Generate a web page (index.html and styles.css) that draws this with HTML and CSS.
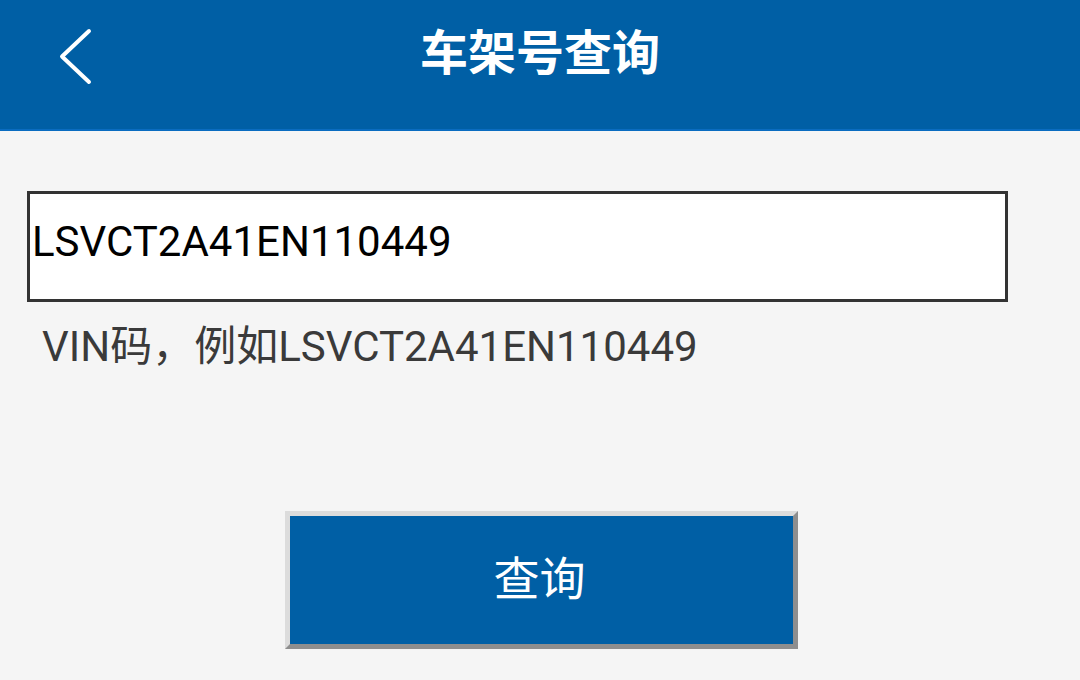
FILE: index.html
```html
<!DOCTYPE html>
<html lang="zh">
<head>
<meta charset="utf-8">
<link rel="stylesheet" href="styles.css">
</head>
<body>
<header class="topbar">
  <a class="back" aria-label="返回">
    <svg width="40" height="60" viewBox="0 0 40 60"><polyline points="32,5 5,30.5 32,56" fill="none" stroke="#fff" stroke-width="4" stroke-linecap="round" stroke-linejoin="round"/></svg>
  </a>
  <h1 class="title">车架号查询</h1>
</header>
<main class="content">
  <div class="field">LSVCT2A41EN110449</div>
  <p class="hint">VIN码，例如LSVCT2A41EN110449</p>
  <div class="actions">
    <button class="btn">查询</button>
  </div>
</main>
</body>
</html>
```
FILE: styles.css
```css
html, body {
  margin: 0;
  padding: 0;
  background: #f5f5f5;
  font-family: Roboto, "Noto Sans CJK SC", sans-serif;
  width: 1080px;
  height: 680px;
  overflow: hidden;
}
.topbar {
  height: 129px;
  background: #005fa5;
  border-bottom: 2px solid #0a6cc0;
  display: flex;
  align-items: center;
  justify-content: center;
  position: relative;
}
.back {
  position: absolute;
  left: 57px;
  top: 26px;
  display: block;
}
.back svg { display: block; }
.title {
  margin: 0;
  color: #fff;
  font-size: 48px;
  font-weight: bold;
  font-family: "Noto Sans CJK SC", sans-serif;
  line-height: 1;
  padding-bottom: 32px;
}
.content {
  padding: 60px 0 0 27px;
}
.field {
  box-sizing: border-box;
  width: 981px;
  height: 111px;
  border: 3px solid #333;
  background: #fff;
  font-size: 42px;
  color: #000;
  display: flex;
  align-items: center;
  padding-left: 2px;
  padding-bottom: 11px;
}
.hint {
  margin: 20px 0 0 15px;
  font-size: 42px;
  color: #3a3a3a;
  line-height: 50px;
}
.actions {
  padding: 139px 0 0 258px;
}
.btn {
  box-sizing: border-box;
  width: 513px;
  height: 138px;
  background: #005fa5;
  border: 5px solid;
  border-color: #dcdcdc #8e8e8e #8e8e8e #dcdcdc;
  color: #fff;
  font-size: 46px;
  font-family: "Noto Sans CJK SC", sans-serif;
  padding: 0 4px 11px 0;
  cursor: pointer;
}
```
